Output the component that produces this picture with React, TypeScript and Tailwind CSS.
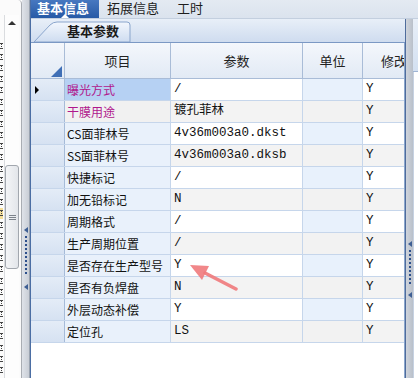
import React from 'react';

type Row = { item: string; value: string; mod: string; magenta?: boolean };

const rows: Row[] = [
  { item: '曝光方式', value: '/', mod: 'Y', magenta: true },
  { item: '干膜用途', value: '镀孔菲林', mod: 'Y', magenta: true },
  { item: 'CS面菲林号', value: '4v36m003a0.dkst', mod: 'Y' },
  { item: 'SS面菲林号', value: '4v36m003a0.dksb', mod: 'Y' },
  { item: '快捷标记', value: '/', mod: 'Y' },
  { item: '加无铅标记', value: 'N', mod: 'Y' },
  { item: '周期格式', value: '/', mod: 'Y' },
  { item: '生产周期位置', value: '/', mod: 'Y' },
  { item: '是否存在生产型号', value: 'Y', mod: 'Y' },
  { item: '是否有负焊盘', value: 'N', mod: 'Y' },
  { item: '外层动态补偿', value: 'Y', mod: 'Y' },
  { item: '定位孔', value: 'LS', mod: 'Y' },
];

const cjk = { fontFamily: '"Noto Sans CJK SC", "Noto Sans", sans-serif' };
const mono = { fontFamily: '"Liberation Mono", "Noto Sans CJK SC", monospace' };

// 小的左向箭头
const LeftArrow = ({ top }: { top: number }) => (
  <div
    className="absolute left-[2px] w-0 h-0 border-t-[3px] border-b-[3px] border-r-[4px] border-t-transparent border-b-transparent border-r-[#3e5f94]"
    style={{ top }}
  />
);

// 分隔条（带箭头和点）
function Splitter({ arrowTop, span, className }: { arrowTop: number; span: number; className: string }) {
  const dots = Math.floor((span - 14) / 4);
  return (
    <div className={`relative h-full shrink-0 ${className}`}>
      <LeftArrow top={arrowTop} />
      <div className="absolute left-[3px] w-[2px] flex flex-col gap-[2px]" style={{ top: arrowTop + 9 }}>
        {Array.from({ length: dots }).map((_, i) => (
          <div key={i} className="w-[2px] h-[2px] bg-[#2c4f8c]" />
        ))}
      </div>
      <LeftArrow top={arrowTop + span} />
    </div>
  );
}

function LeftPanel() {
  return (
    <div className="relative w-[22px] shrink-0 h-full bg-[#fbfbfb] border-r border-[#a9adb3] rounded-tr-[4px] overflow-hidden">
      {/* 被截断的文字列 */}
      <div className="absolute left-0 top-[40px] w-[3px] overflow-hidden flex flex-col">
        {Array.from({ length: 30 }).map((_, i) => (
          <div key={i} className={`h-[11.2px] w-[3px] flex items-center ${i === 15 ? 'bg-[#f6df9a]' : ''}`}>
            <div className="w-[2px] h-[6px] border-y border-r border-dotted border-[#444]" />
          </div>
        ))}
      </div>
      {/* 滚动条 */}
      <div className="absolute left-[4px] top-[15px] bottom-0 w-[15px] border-l border-[#dadcdf] bg-[#fdfdfd]">
        <div className="mx-auto mt-[6px] w-0 h-0 border-l-[4px] border-r-[4px] border-b-[4px] border-l-transparent border-r-transparent border-b-[#333]" />
        <div className="absolute left-0 top-[150px] w-[14px] h-[104px] rounded-[3px] border border-[#a2a7ae] bg-gradient-to-r from-[#f4f5f7] to-[#e3e6ea] flex flex-col items-center justify-center gap-[1px]">
          <div className="w-[7px] h-[1px] bg-[#7d838b]" />
          <div className="w-[7px] h-[1px] bg-[#7d838b]" />
          <div className="w-[7px] h-[1px] bg-[#7d838b]" />
        </div>
      </div>
    </div>
  );
}

function TopTabs() {
  return (
    <div className="h-[19px] shrink-0 flex items-start bg-gradient-to-b from-[#e4eaf2] to-[#dbe3ee] border-b border-[#c3cfdf]" style={cjk}>
      <div className="relative w-[68px] h-[18px] bg-gradient-to-b from-[#4778c0] to-[#275aa6] pl-[6px]">
        <span className="block text-white font-bold text-[13px] leading-[15px]">基本信息</span>
        <div className="absolute left-[30px] bottom-0 w-0 h-0 border-l-[4px] border-r-[4px] border-b-[4px] border-l-transparent border-r-transparent border-b-white" />
      </div>
      <span className="ml-[8px] text-[13px] leading-[15px] text-[#1d1d1d]">拓展信息</span>
      <span className="ml-[18px] text-[13px] leading-[15px] text-[#1d1d1d]">工时</span>
    </div>
  );
}

function SubTabs() {
  return (
    <div className="h-[24px] shrink-0 bg-gradient-to-b from-[#e8eff8] to-[#cfdcef] border-b border-[#7b98c4] flex items-end">
      <div className="relative w-[101px] h-[23px]">
        <svg className="absolute inset-0" width="101" height="23" viewBox="0 0 101 23">
          <defs>
            <linearGradient id="tabg" x1="0" y1="0" x2="0" y2="1">
              <stop offset="0" stopColor="#f3f7fd" />
              <stop offset="1" stopColor="#cedcf0" />
            </linearGradient>
          </defs>
          <path d="M3,23 L19,6 Q22,3 26,3 L96,3 Q99,3 99,6 L99,23 Z" fill="url(#tabg)" stroke="#8aa5cc" strokeWidth="1" />
        </svg>
        <span className="absolute left-[36px] top-[5px] text-[13px] leading-[14px] font-bold text-[#1a1a1a]" style={cjk}>
          基本参数
        </span>
      </div>
    </div>
  );
}

function Grid() {
  const cols = 'grid grid-cols-[34px_106px_132px_60px_64px]';
  return (
    <div className="relative flex-1 min-w-0 bg-white overflow-hidden border-r border-[#8ca7cd]">
      {/* 表头 */}
      <div className={`${cols} h-[36px] bg-gradient-to-b from-[#f4f7fc] to-[#e2eaf5] border-b border-[#a9bcd7] text-[13px] text-[#222]`} style={cjk}>
        <div className="relative border-r border-[#a9bcd7]">
          <div className="absolute right-[2px] bottom-[1px] w-0 h-0 border-l-[11px] border-b-[11px] border-l-transparent border-b-[#3f6fb6]" />
        </div>
        <div className="border-r border-[#a9bcd7] flex items-center justify-center">项目</div>
        <div className="border-r border-[#a9bcd7] flex items-center justify-center">参数</div>
        <div className="border-r border-[#a9bcd7] flex items-center justify-center">单位</div>
        <div className="flex items-center justify-center pr-[2px]">修改</div>
      </div>
      {rows.map((r, i) => {
        const odd = i % 2 === 0;
        const selected = i === 0;
        const itemBg = selected ? 'bg-[#b6d1f3]' : i === 1 ? 'bg-[#f1f1f1]' : 'bg-[#e9f1fb]';
        return (
          <div key={i} className={`${cols} h-[22px] border-b border-[#c6d6eb]`}>
            <div className="relative border-r border-[#a6bbd8] bg-gradient-to-b from-[#e4ecf7] to-[#d6e2f2]">
              {selected && (
                <div className="absolute left-[4px] top-[7px] w-0 h-0 border-t-[4px] border-b-[4px] border-l-[4px] border-t-transparent border-b-transparent border-l-black" />
              )}
            </div>
            <div
              className={`${itemBg} border-r border-[#c6d6eb] pl-[2px] flex items-center text-[12px] whitespace-nowrap ${r.magenta ? 'text-[#b0178c]' : 'text-[#111]'}`}
              style={cjk}
            >
              {r.item}
            </div>
            <div
              className={`${odd ? 'bg-white' : 'bg-[#f3f3f3]'} border-r border-[#c6d6eb] pl-[3px] flex items-center text-[12.5px] text-[#111] whitespace-nowrap`}
              style={mono}
            >
              {r.value}
            </div>
            <div className={`${odd ? 'bg-[#e8f1fc]' : 'bg-[#f2f2f2]'} border-r border-[#c6d6eb]`} />
            <div className={`${odd ? 'bg-white' : 'bg-[#f3f3f3]'} pl-[3px] flex items-center text-[12.5px] text-[#111]`} style={mono}>
              {r.mod}
            </div>
          </div>
        );
      })}
    </div>
  );
}

export default function App() {
  return (
    <div className="relative w-[418px] h-[378px] flex overflow-hidden bg-white">
      <LeftPanel />
      <Splitter arrowTop={227} span={57} className="w-[8px] bg-gradient-to-r from-[#dfe3e9] to-[#c9ced6] border-r border-[#9aa3b0]" />
      <div className="flex-1 min-w-0 h-full flex flex-col border-l border-[#4b6ea4]">
        <TopTabs />
        <div className="flex flex-1 min-h-0">
          <div className="flex-1 flex flex-col min-w-0">
            <SubTabs />
            <Grid />
          </div>
          <Splitter arrowTop={222} span={51} className="w-[8px] bg-gradient-to-r from-[#cfd4dc] to-[#b9c0ca] border-l border-[#4f6c9c]" />
          <div className="w-[5px] shrink-0 flex flex-col">
            <div className="h-[53px] bg-gradient-to-b from-[#e8eff8] to-[#d3e0f1] border-b border-[#9fb4d3]" />
            <div className="flex-1 bg-white border-l border-[#c7d2e2]" />
          </div>
        </div>
      </div>
      {/* 红色批注箭头 */}
      <svg className="absolute left-0 top-0 pointer-events-none" width="418" height="378">
        <line x1="205" y1="273" x2="236" y2="289" stroke="#f07a7c" strokeWidth="3.5" strokeLinecap="round" opacity="0.9" />
        <polygon points="190,265 209,266 202,280" fill="#f07a7c" opacity="0.9" />
      </svg>
    </div>
  );
}
